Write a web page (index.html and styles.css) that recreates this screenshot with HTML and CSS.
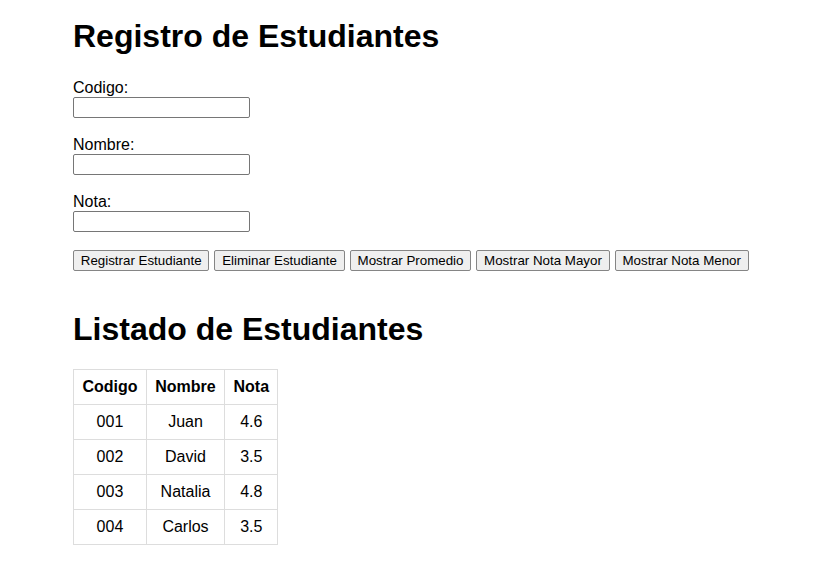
FILE: index.html
```html
<!DOCTYPE html>
<html lang="es">
<head>
<meta charset="utf-8">
<title>Registro de Estudiantes</title>
<link rel="stylesheet" href="styles.css">
</head>
<body>
<main class="page">
  <h1 class="title">Registro de Estudiantes</h1>
  <form class="form">
    <div class="field">
      <label class="label" for="codigo">Codigo:</label>
      <input class="input" id="codigo" type="text">
    </div>
    <div class="field">
      <label class="label" for="nombre">Nombre:</label>
      <input class="input" id="nombre" type="text">
    </div>
    <div class="field">
      <label class="label" for="nota">Nota:</label>
      <input class="input" id="nota" type="text">
    </div>
    <div class="actions">
      <button class="btn" type="button">Registrar Estudiante</button>
      <button class="btn" type="button">Eliminar Estudiante</button>
      <button class="btn" type="button">Mostrar Promedio</button>
      <button class="btn" type="button">Mostrar Nota Mayor</button>
      <button class="btn" type="button">Mostrar Nota Menor</button>
    </div>
  </form>
  <h2 class="title title-list">Listado de Estudiantes</h2>
  <table class="table">
    <thead>
      <tr><th>Codigo</th><th>Nombre</th><th>Nota</th></tr>
    </thead>
    <tbody>
      <tr><td>001</td><td>Juan</td><td>4.6</td></tr>
      <tr><td>002</td><td>David</td><td>3.5</td></tr>
      <tr><td>003</td><td>Natalia</td><td>4.8</td></tr>
      <tr><td>004</td><td>Carlos</td><td>3.5</td></tr>
    </tbody>
  </table>
</main>
</body>
</html>
```
FILE: styles.css
```css
html, body {
  margin: 0;
  padding: 0;
  background: #fff;
}
body {
  font-family: "Liberation Sans", Arial, sans-serif;
  font-size: 16px;
  color: #000;
}
.page {
  padding: 18px 73px;
}
.title {
  font-size: 32px;
  font-weight: bold;
  margin: 0;
  line-height: 37px;
}
.form {
  margin-top: 24px;
  display: flex;
  flex-direction: column;
}
.field {
  display: flex;
  flex-direction: column;
  align-items: flex-start;
  margin-bottom: 18px;
}
.label {
  line-height: 18px;
}
.input {
  width: 177px;
  height: 21px;
  box-sizing: border-box;
  margin: 0;
  border: 1px solid #767676;
  border-radius: 2px;
  font-size: 13.33px;
  padding: 1px 2px;
}
.actions {
  display: flex;
  gap: 5px;
}
.btn {
  font-family: "Liberation Sans", Arial, sans-serif;
  font-size: 13.33px;
  height: 21px;
  padding: 1px 6.8px;
  background: #efefef;
  border: 1px solid #858585;
  border-radius: 2px;
  color: #000;
}
.title-list {
  margin-top: 40px;
}
.table {
  margin-top: 21px;
  border-collapse: collapse;
}
.table th, .table td {
  border: 1px solid #ddd;
  padding: 8px 8.4px;
  text-align: center;
  height: 18px;
  line-height: 18px;
}
```
